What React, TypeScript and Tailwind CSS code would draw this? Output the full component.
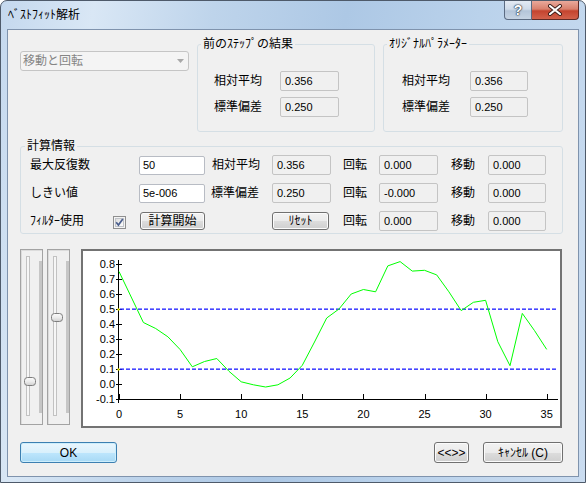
import React from "react";

const data: [number, number][] = [
  [0, 0.75], [1, 0.58], [2, 0.41], [3, 0.37], [4, 0.315], [5, 0.23], [6, 0.115], [7, 0.15],
  [8, 0.17], [9, 0.085], [10, 0.015], [11, -0.005], [12, -0.02], [13, -0.005], [14, 0.04],
  [15, 0.125], [16, 0.28], [17, 0.44], [18, 0.5], [19, 0.6], [20, 0.63], [21, 0.615],
  [22, 0.787], [23, 0.816], [24, 0.753], [25, 0.758], [26, 0.727], [27, 0.615], [28, 0.489],
  [29, 0.545], [30, 0.558], [31, 0.282], [32, 0.122], [33, 0.471], [34, 0.356], [35, 0.231],
];

const X = (t: number) => 119 + t * 12.22;
const Y = (v: number) => 264 + (0.8 - v) * 150;

const dashXs: number[] = [];
for (let x = 120; x < 558; x += 6) dashXs.push(x);

function VBox({ v, className = "w-[59px]" }: { v: string; className?: string }) {
  return (
    <div
      className={`${className} h-[20px] shrink-0 rounded-[2px] border border-[#c4c4c4] bg-[#f0f0f0] flex items-center pl-[4px] text-[11px] leading-[12px] text-black`}
    >
      {v}
    </div>
  );
}

function Input({ v }: { v: string }) {
  return (
    <div className="w-[66px] h-[19px] shrink-0 rounded-[2px] border border-[#b8bcc4] bg-white flex items-center pl-[3px] text-[11px] leading-[12px] text-black">
      {v}
    </div>
  );
}

function Btn({ children, className = "" }: { children: React.ReactNode; className?: string }) {
  return (
    <div
      className={`${className} shrink-0 rounded-[3px] border border-[#707070] bg-[linear-gradient(to_bottom,#f2f2f2_0%,#ebebeb_50%,#dddddd_50%,#cfcfcf_100%)] shadow-[inset_0_0_0_1px_#fbfbfb] flex items-center justify-center text-[12px] leading-[14px] text-black`}
    >
      {children}
    </div>
  );
}

function Slider({ thumbY, className = "" }: { thumbY: number; className?: string }) {
  return (
    <div className={`${className} w-[23px] h-[176px] shrink-0 border border-[#a3a3a3] shadow-[inset_1px_1px_0_#dcdcdc] bg-[#f0f0f0]`}>
      <svg width="21" height="174" viewBox="0 0 21 174">
        <defs>
          <linearGradient id="thumbg" x1="0" y1="0" x2="0" y2="1">
            <stop offset="0" stopColor="#fbfbfb" />
            <stop offset="0.5" stopColor="#ececec" />
            <stop offset="1" stopColor="#cfcfcf" />
          </linearGradient>
        </defs>
        <rect x="5.5" y="6.5" width="3" height="159" fill="#f6f6f6" stroke="#c2c2c2" />
        <rect x="18" y="11" width="3.5" height="152" fill="#c6c6c6" />
        <rect x="3.5" y={thumbY + 0.5} width="11" height="8" rx="3" fill="url(#thumbg)" stroke="#7d7d7d" />
      </svg>
    </div>
  );
}

function Chart() {
  const pts = data.map(([t, v]) => `${X(t).toFixed(1)},${Y(v).toFixed(1)}`).join(" ");
  const yv = [0.8, 0.7, 0.6, 0.5, 0.4, 0.3, 0.2, 0.1, 0.0, -0.1];
  const xt = [0, 5, 10, 15, 20, 25, 30, 35];
  return (
    <div className="ml-[11px] w-[481px] h-[179px] shrink-0 border-2 border-[#737373] bg-white">
      <svg width="477" height="175" viewBox="83 251 477 175" className="block">
        <line x1="118" y1="399.5" x2="558" y2="399.5" stroke="#000" shapeRendering="crispEdges" />
        <line x1="118.5" y1="260" x2="118.5" y2="403" stroke="#000" shapeRendering="crispEdges" />
        {yv.map((v) => {
          const y = Math.round(Y(v)) + 0.5;
          return (
            <g key={v}>
              <line x1="116" y1={y} x2="122" y2={y} stroke="#000" shapeRendering="crispEdges" />
              <text
                x="115"
                y={Y(v) + 4}
                textAnchor="end"
                fontSize="11"
                fontFamily="'Liberation Sans', Arial, sans-serif"
                fill="#000"
              >
                {v.toFixed(1)}
              </text>
            </g>
          );
        })}
        {xt.map((t) => {
          const x = Math.round(X(t)) + 0.5;
          return (
            <g key={t}>
              <line x1={x} y1="394" x2={x} y2="399" stroke="#000" shapeRendering="crispEdges" />
              <text
                x={X(t)}
                y="418"
                textAnchor="middle"
                fontSize="11"
                fontFamily="'Liberation Sans', Arial, sans-serif"
                fill="#000"
              >
                {t}
              </text>
            </g>
          );
        })}
        {dashXs.map((x) => (
          <g key={x}>
            <rect x={x} y="308.5" width="4" height="1.3" fill="#1a1aff" />
            <rect x={x} y="368.5" width="4" height="1.3" fill="#1a1aff" />
          </g>
        ))}
        <rect x="117.5" y="308.5" width="2" height="2" fill="#ffff00" />
        <rect x="117.5" y="368.5" width="2" height="2" fill="#ffff00" />
        <polyline points={pts} fill="none" stroke="#00ff00" strokeWidth="1" />
      </svg>
    </div>
  );
}

export default function App() {
  return (
    <div className="w-[586px] h-[483px] overflow-hidden rounded-t-[7px] border border-[#4e5a6a] bg-[linear-gradient(100deg,#c4d8ee_0%,#d9e7f5_14%,#bed4eb_32%,#adc8e5_52%,#bad2eb_72%,#cadcf0_100%)] font-[family-name:'Liberation_Sans','Noto_Sans_CJK_JP',sans-serif] text-black select-none">
      {/* title bar */}
      <div className="h-[28px] flex items-start">
        <div className="pl-[7px] pt-[7px] text-[12px] leading-[14px] text-black">ﾍﾞｽﾄﾌｨｯﾄ解析</div>
        <div className="ml-auto mr-[6px] flex items-start">
          <div className="w-[28px] h-[19px] rounded-bl-[4px] border border-t-0 border-[#5b6b82] bg-[linear-gradient(to_bottom,#e3eaf3_0%,#cfdbe9_45%,#b4c5d9_55%,#c6d4e4_100%)] flex items-center justify-center">
            <span className="text-[14px] leading-[14px] font-bold text-white [text-shadow:0_0_1px_#233246,0_0_1px_#233246,0_0_2px_#233246] font-[family-name:'Liberation_Sans',sans-serif]">?</span>
          </div>
          <div className="w-[47px] h-[19px] rounded-br-[4px] border border-l-0 border-t-0 border-[#5e2a26] bg-[linear-gradient(to_bottom,#e9a99b_0%,#d8806d_45%,#c4442f_55%,#d2614b_100%)] flex items-center justify-center">
            <svg width="16" height="12" viewBox="0 0 16 12">
              <path d="M3 2 L13 10 M13 2 L3 10" stroke="#3a1c18" strokeWidth="4" strokeLinecap="round" />
              <path d="M3 2 L13 10 M13 2 L3 10" stroke="#ffffff" strokeWidth="2.2" strokeLinecap="round" />
            </svg>
          </div>
        </div>
      </div>

      {/* client */}
      <div className="mx-[6px] h-[448px] border border-[#7f93ad] bg-[#f0f0f0] flex flex-col">
        {/* top row */}
        <div className="flex items-start pt-[8px]">
          <div className="ml-[12px] mt-[13px] w-[169px] h-[20px] shrink-0 rounded-[3px] border border-[#c5c5c5] bg-[#f4f4f4] flex items-center pl-[2px] pr-[4px] text-[12px] leading-[14px] text-[#858585]">
            <span>移動と回転</span>
            <svg className="ml-auto" width="7" height="4" viewBox="0 0 7 4">
              <path d="M0 0 H7 L3.5 4 Z" fill="#a8a8a8" />
            </svg>
          </div>
          <fieldset className="ml-[8px] w-[178px] h-[94px] shrink-0 rounded-[3px] border border-[#d5dfe5]">
            <legend className="ml-[3px] px-[2px] text-[12px] leading-[12px]">前のｽﾃｯﾌﾟの結果</legend>
            <div className="flex flex-col gap-[6px] pt-[21px] pl-[16px]">
              <div className="flex items-center">
                <span className="w-[66px] text-[12px] leading-[14px]">相対平均</span>
                <VBox v="0.356" />
              </div>
              <div className="flex items-center">
                <span className="w-[66px] text-[12px] leading-[14px]">標準偏差</span>
                <VBox v="0.250" />
              </div>
            </div>
          </fieldset>
          <fieldset className="ml-[8px] w-[180px] h-[94px] shrink-0 rounded-[3px] border border-[#d5dfe5]">
            <legend className="ml-[3px] px-[2px] text-[12px] leading-[12px]">ｵﾘｼﾞﾅﾙﾊﾟﾗﾒｰﾀｰ</legend>
            <div className="flex flex-col gap-[6px] pt-[21px] pl-[18px]">
              <div className="flex items-center">
                <span className="w-[68px] text-[12px] leading-[14px]">相対平均</span>
                <VBox v="0.356" className="w-[58px]" />
              </div>
              <div className="flex items-center">
                <span className="w-[68px] text-[12px] leading-[14px]">標準偏差</span>
                <VBox v="0.250" className="w-[58px]" />
              </div>
            </div>
          </fieldset>
        </div>

        {/* calc info */}
        <fieldset className="ml-[12px] mt-[8px] w-[543px] h-[94px] shrink-0 rounded-[3px] border border-[#d5dfe5]">
          <legend className="ml-[4px] px-[2px] text-[12px] leading-[12px]">計算情報</legend>
          <div className="flex flex-col gap-[8px] pt-[3px] pl-[9px] text-[12px] leading-[14px]">
            <div className="flex items-center h-[20px]">
              <span className="w-[109px]">最大反復数</span>
              <Input v="50" />
              <span className="ml-[7px] w-[60px]">相対平均</span>
              <VBox v="0.356" />
              <span className="ml-[12px] w-[36px]">回転</span>
              <VBox v="0.000" />
              <span className="ml-[13px] w-[37px]">移動</span>
              <VBox v="0.000" className="w-[58px]" />
            </div>
            <div className="flex items-center h-[20px]">
              <span className="w-[109px]">しきい値</span>
              <Input v="5e-006" />
              <span className="ml-[6px] w-[61px]">標準偏差</span>
              <VBox v="0.250" />
              <span className="ml-[12px] w-[36px]">回転</span>
              <VBox v="-0.000" />
              <span className="ml-[13px] w-[37px]">移動</span>
              <VBox v="0.000" className="w-[58px]" />
            </div>
            <div className="flex items-center h-[20px]">
              <span className="w-[83px]">ﾌｨﾙﾀｰ使用</span>
              <svg width="13" height="13" viewBox="0 0 13 13" className="shrink-0 mt-[2px]">
                <defs>
                  <linearGradient id="cbg" x1="0" y1="0" x2="1" y2="1">
                    <stop offset="0" stopColor="#dcdcdc" />
                    <stop offset="1" stopColor="#ffffff" />
                  </linearGradient>
                </defs>
                <rect x="0.5" y="0.5" width="12" height="12" fill="#f4f4f4" stroke="#8f8f8f" />
                <rect x="2.5" y="2.5" width="8" height="8" fill="url(#cbg)" stroke="#c0c3c8" />
                <path d="M3.2 6.3 L5.4 9 L9.8 3" fill="none" stroke="#4b5f8e" strokeWidth="1.7" />
              </svg>
              <Btn className="ml-[14px] w-[65px] h-[18px]">計算開始</Btn>
              <Btn className="ml-[67px] w-[57px] h-[18px]">ﾘｾｯﾄ</Btn>
              <span className="ml-[14px] w-[36px]">回転</span>
              <VBox v="0.000" />
              <span className="ml-[13px] w-[37px]">移動</span>
              <VBox v="0.000" className="w-[58px]" />
            </div>
          </div>
        </fieldset>

        {/* sliders + chart */}
        <div className="flex items-start mt-[15px] ml-[12px]">
          <Slider thumbY={127} />
          <Slider thumbY={63} className="ml-[4px]" />
          <Chart />
        </div>

        {/* bottom buttons */}
        <div className="flex items-start mt-[14px]">
          <div className="ml-[12px] w-[97px] h-[21px] rounded-[3px] border border-[#3c7fb1] bg-[linear-gradient(to_bottom,#eaf6fd_0%,#d9f0fc_50%,#bee6fd_50%,#a7d9f5_100%)] shadow-[inset_0_0_0_1px_#cdeefc] flex items-center justify-center text-[12px] leading-[14px]">
            OK
          </div>
          <Btn className="ml-auto w-[35px] h-[21px]">&lt;&lt;&gt;&gt;</Btn>
          <Btn className="ml-[14px] mr-[15px] w-[80px] h-[21px]">ｷｬﾝｾﾙ (C)</Btn>
        </div>
      </div>
    </div>
  );
}
